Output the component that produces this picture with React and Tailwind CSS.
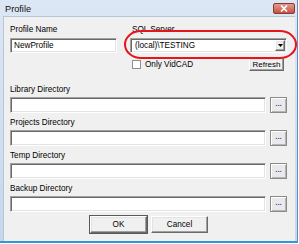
export default function App() {
  const sunken =
    "bg-white border border-t-[#a0a0a0] border-l-[#a0a0a0] border-b-white border-r-white shadow-[inset_1px_1px_0_#696969,inset_-1px_-1px_0_#e3e3e3]";
  const raised =
    "bg-[#f0f0f0] border border-t-white border-l-white border-r-[#696969] border-b-[#696969] shadow-[inset_-1px_-1px_0_#a0a0a0,inset_1px_1px_0_#e3e3e3]";
  const label = "h-[10px] leading-[10px] text-[8.2px] text-black whitespace-nowrap";

  const DirRow = ({ title, first }) => (
    <div className={first ? "mt-[14px]" : "mt-[5px]"}>
      <div className={label}>{title}</div>
      <div className="mt-[2px] flex items-center">
        <div className={`w-[256px] h-[16px] ${sunken}`} />
        <div
          className={`ml-[4px] w-[17px] h-[16px] flex items-center justify-center border border-[#8a8a8a] bg-[#e9e9e9] shadow-[inset_1px_1px_0_#ffffff,inset_-1px_-1px_0_#b5b5b5]`}
        >
          <span className="text-[8px] leading-[8px] text-[#4a4aa8] font-bold tracking-[0px] -mt-[2px]">...</span>
        </div>
      </div>
    </div>
  );

  return (
    <div className="w-[299px] h-[244px] bg-white overflow-hidden font-['Liberation_Sans',Arial,sans-serif] relative">
      <div className="w-[298px] h-[243px] flex flex-col bg-gradient-to-b from-[#dce7f4] to-[#c6d7ec] border-b-[2px] border-b-[#2f97dc] border-r border-r-[#5f8fbf]">
        {/* Title bar */}
        <div className="h-[16px] flex items-center pl-[5px] relative">
          <span className="text-[9.2px] leading-[10px] text-[#111] pt-[1px]">Profile</span>
          <div className="absolute right-[2px] top-[3px] w-[22px] h-[11px] rounded-[2px] border border-[#8a3a30] bg-gradient-to-b from-[#e49a8e] to-[#c8503f] flex items-center justify-center">
            <svg width="8" height="7" viewBox="0 0 8 7">
              <path d="M1 0.5 L7 6.5 M7 0.5 L1 6.5" stroke="white" strokeWidth="1.6" />
            </svg>
          </div>
        </div>
        {/* Client area */}
        <div className="flex-1 ml-[3px] mr-[2px] bg-[#f0f0f0] border-t border-l border-[#b7c6d8] pl-[6px] pt-[8px] flex flex-col">
          {/* Row 1 */}
          <div className="flex">
            <div className="w-[107px]">
              <div className={label}>Profile Name</div>
              <div className={`mt-[3px] h-[15px] ${sunken} flex items-center pl-[3px]`}>
                <span className="text-[8.2px] leading-[10px]">NewProfile</span>
              </div>
            </div>
            <div className="ml-[13px] w-[157px]">
              <div className={`${label} pl-[2px]`}>SQL Server</div>
              <div className={`mt-[3px] h-[15px] ${sunken} flex items-center pl-[4px] pr-[1px]`}>
                <span className="flex-1 text-[8.2px] leading-[10px]">(local)\TESTING</span>
                <div className={`w-[10px] h-[11px] ${raised} flex items-center justify-center`}>
                  <svg width="5" height="3" viewBox="0 0 5 3">
                    <path d="M0 0 H5 L2.5 3 Z" fill="black" />
                  </svg>
                </div>
              </div>
            </div>
          </div>
          {/* Row 2 */}
          <div className="flex mt-[5px]">
            <div className="ml-[120px] w-[154px] flex items-center justify-between">
              <div className="flex items-center">
                <div className="ml-[2px] w-[9px] h-[9px] bg-white border border-[#8e8f8f]" />
                <span className="ml-[4px] text-[8.2px] leading-[10px]">Only VidCAD</span>
              </div>
              <div className={`w-[35px] h-[13px] ${raised} flex items-center justify-center`}>
                <span className="text-[8px] leading-[10px]">Refresh</span>
              </div>
            </div>
          </div>
          <DirRow title="Library Directory" first />
          <DirRow title="Projects Directory" />
          <DirRow title="Temp Directory" />
          <DirRow title="Backup Directory" />
          {/* Buttons */}
          <div className="mt-[4px] flex justify-center gap-[4px] pr-[7px]">
            <div className={`w-[57px] h-[17px] ${raised} outline outline-1 outline-[#5a5a5a] flex items-center justify-center`}>
              <span className="text-[8.2px] leading-[10px]">OK</span>
            </div>
            <div className={`w-[57px] h-[17px] ${raised} flex items-center justify-center`}>
              <span className="text-[8.2px] leading-[10px]">Cancel</span>
            </div>
          </div>
        </div>
      </div>
      {/* Red annotation ellipse */}
      <svg className="absolute left-[124px] top-[30px]" width="173" height="29" viewBox="0 0 173 29">
        <rect x="1" y="1" width="171" height="27" rx="16" ry="13.5" fill="none" stroke="#e8141b" strokeWidth="2" />
      </svg>
    </div>
  );
}
